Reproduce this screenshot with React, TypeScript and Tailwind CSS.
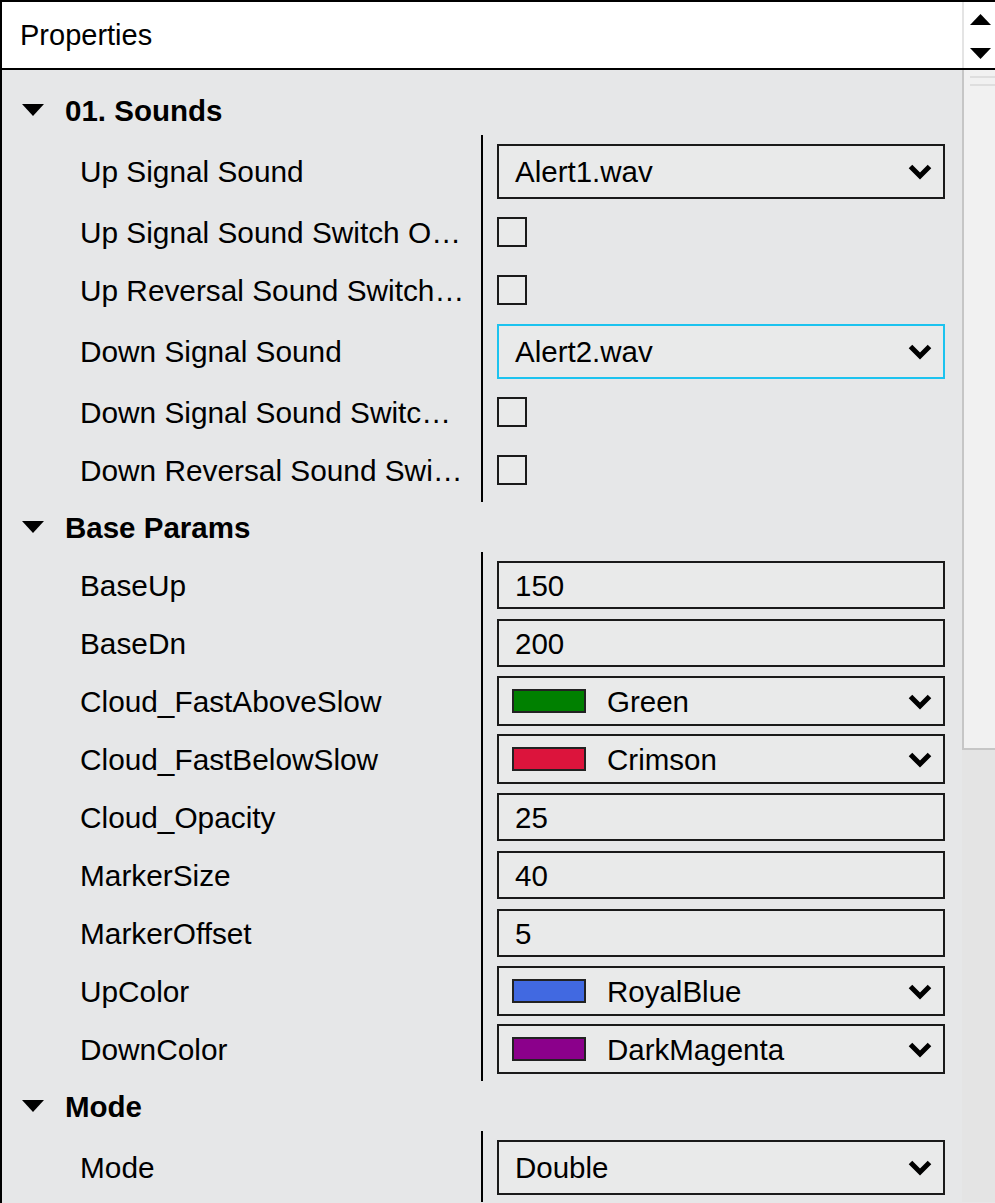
import React from "react";

type Row = {
  label: string;
  kind: "combo" | "check" | "text" | "color";
  value?: string;
  swatch?: string;
  focus?: boolean;
};

type Section = { title: string; rows: Row[] };

const sections: Section[] = [
  {
    title: "01. Sounds",
    rows: [
      { label: "Up Signal Sound", kind: "combo", value: "Alert1.wav" },
      { label: "Up Signal Sound Switch O…", kind: "check" },
      { label: "Up Reversal Sound Switch…", kind: "check" },
      { label: "Down Signal Sound", kind: "combo", value: "Alert2.wav", focus: true },
      { label: "Down Signal Sound Switc…", kind: "check" },
      { label: "Down Reversal Sound Swi…", kind: "check" },
    ],
  },
  {
    title: "Base Params",
    rows: [
      { label: "BaseUp", kind: "text", value: "150" },
      { label: "BaseDn", kind: "text", value: "200" },
      { label: "Cloud_FastAboveSlow", kind: "color", value: "Green", swatch: "bg-[#008000]" },
      { label: "Cloud_FastBelowSlow", kind: "color", value: "Crimson", swatch: "bg-[#dc143c]" },
      { label: "Cloud_Opacity", kind: "text", value: "25" },
      { label: "MarkerSize", kind: "text", value: "40" },
      { label: "MarkerOffset", kind: "text", value: "5" },
      { label: "UpColor", kind: "color", value: "RoyalBlue", swatch: "bg-[#4169e1]" },
      { label: "DownColor", kind: "color", value: "DarkMagenta", swatch: "bg-[#8b008b]" },
    ],
  },
  {
    title: "Mode",
    rows: [{ label: "Mode", kind: "combo", value: "Double" }],
  },
];

function rowH(r: Row) {
  return r.kind === "combo" ? "h-[64px]" : "h-[58px]";
}

function Chevron() {
  return (
    <svg width="24" height="17" viewBox="0 0 24 17" className="shrink-0">
      <polyline
        points="2.5,3.5 12,13 21.5,3.5"
        fill="none"
        stroke="#000"
        strokeWidth="5"
        strokeLinejoin="miter"
        strokeLinecap="butt"
      />
    </svg>
  );
}

function Value({ r }: { r: Row }) {
  if (r.kind === "check") {
    return <div className="w-[30px] h-[30px] border-2 border-[#1a1a1a] bg-[#e9eaea]" />;
  }
  if (r.kind === "combo") {
    return (
      <div
        className={
          "w-[448px] h-[55px] border-2 bg-[#e9eaea] flex items-center pl-[16px] pr-[11px] " +
          (r.focus ? "border-[#1cc3ef]" : "border-[#1a1a1a]")
        }
      >
        <span className="flex-1 pt-[1px]">{r.value}</span>
        <Chevron />
      </div>
    );
  }
  if (r.kind === "color") {
    return (
      <div className="w-[448px] h-[50px] border-2 border-[#1a1a1a] bg-[#e9eaea] flex items-center pl-[13px] pr-[11px]">
        <div className={"w-[74px] h-[24px] border-2 border-[#222] shrink-0 " + r.swatch} />
        <span className="flex-1 pl-[21px] pt-[1px]">{r.value}</span>
        <Chevron />
      </div>
    );
  }
  return (
    <div className="w-[448px] h-[48px] border-2 border-[#1a1a1a] bg-[#e9eaea] flex items-center pl-[16px]">
      <span className="pt-[1px]">{r.value}</span>
    </div>
  );
}

function SectionView({ s }: { s: Section }) {
  return (
    <div>
      <div className="h-[50px] flex items-center pl-[20px]">
        <svg width="22" height="12" viewBox="0 0 22 12" className="shrink-0">
          <polygon points="0,0 22,0 11,12" fill="#000" />
        </svg>
        <span className="pl-[21px] font-bold text-[29.5px] pt-[1px]">{s.title}</span>
      </div>
      <div className="flex">
        <div className="w-[479px] pt-[4px] pb-[3px] text-[29.8px]">
          {s.rows.map((r, i) => (
            <div
              key={i}
              className={"flex items-center pl-[78px] pr-[4px] pt-[1px] whitespace-nowrap overflow-hidden " + rowH(r)}
            >
              {r.label}
            </div>
          ))}
        </div>
        <div className="border-l-2 border-black pt-[4px] pb-[3px] text-[29.5px]">
          {s.rows.map((r, i) => (
            <div key={i} className={"flex items-center pl-[14px] " + rowH(r)}>
              <Value r={r} />
            </div>
          ))}
        </div>
      </div>
    </div>
  );
}

export default function App() {
  return (
    <div className="w-[995px] h-[1203px] overflow-hidden border-l-2 border-t-2 border-black bg-[#e6e7e8] text-[29px] leading-none text-black [font-family:'Liberation_Sans',Arial,sans-serif]">
      <div className="h-[68px] flex bg-white border-b-2 border-black">
        <div className="flex-1 flex items-center pl-[18px] pt-[1px]">Properties</div>
        <div className="w-[33px] border-l-2 border-[#e4e4e4] flex flex-col items-center justify-between pt-[12px] pb-[9px] pl-[2px]">
          <svg width="21" height="11" viewBox="0 0 21 11">
            <polygon points="0,11 21,11 10.5,0" fill="#000" />
          </svg>
          <svg width="21" height="11" viewBox="0 0 21 11">
            <polygon points="0,0 21,0 10.5,11" fill="#000" />
          </svg>
        </div>
      </div>
      <div className="flex">
        <div className="w-[960px] pt-[15px]">
          {sections.map((s, i) => (
            <SectionView key={i} s={s} />
          ))}
        </div>
        <div className="w-[33px] bg-[#e4e4e4]">
          <div className="h-[680px] border-l-2 border-b-2 border-[#c6c6c6] bg-[#f1f1f1] pt-[6px] pl-[6px] flex flex-col gap-[6px]">
            <div className="h-[2px] bg-[#dedede]" />
            <div className="h-[2px] bg-[#dedede]" />
          </div>
        </div>
      </div>
    </div>
  );
}
